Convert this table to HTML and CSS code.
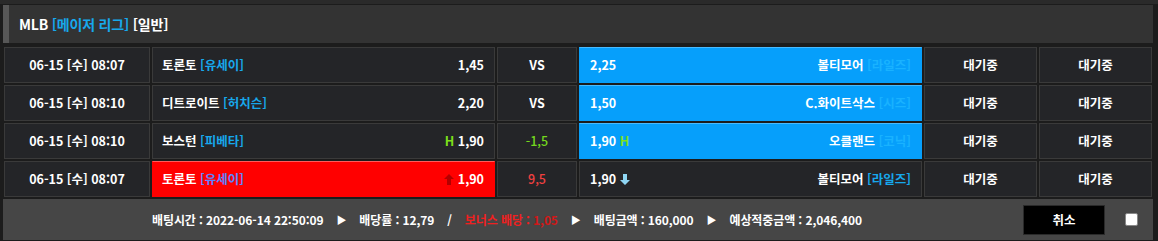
FILE: index.html
```html
<!DOCTYPE html>
<html lang="ko">
<head>
<meta charset="utf-8">
<link rel="stylesheet" href="styles.css">
</head>
<body>
<div class="wrap">
  <div class="league">MLB <span class="blue">[메이저 리그]</span> [일반]</div>
  <div class="rows">
    <div class="row">
      <div class="cell date">06-15 [수] 08:07</div>
      <div class="cell team home"><span>토론토 <span class="blue">[유세이]</span></span><span class="odd">1,45</span></div>
      <div class="cell mid">VS</div>
      <div class="cell team away sel"><span class="odd">2,25</span><span>볼티모어 <span class="blue">[라일즈]</span></span></div>
      <div class="cell st">대기중</div>
      <div class="cell st">대기중</div>
    </div>
    <div class="row">
      <div class="cell date">06-15 [수] 08:10</div>
      <div class="cell team home"><span>디트로이트 <span class="blue">[허치슨]</span></span><span class="odd">2,20</span></div>
      <div class="cell mid">VS</div>
      <div class="cell team away sel"><span class="odd">1,50</span><span>C.화이트삭스 <span class="blue">[시즈]</span></span></div>
      <div class="cell st">대기중</div>
      <div class="cell st">대기중</div>
    </div>
    <div class="row">
      <div class="cell date">06-15 [수] 08:10</div>
      <div class="cell team home"><span>보스턴 <span class="blue">[피베타]</span></span><span class="odd"><b class="h">H</b> 1,90</span></div>
      <div class="cell mid green">-1,5</div>
      <div class="cell team away sel"><span class="odd">1,90 <b class="h">H</b></span><span>오클랜드 <span class="blue">[코닉]</span></span></div>
      <div class="cell st">대기중</div>
      <div class="cell st">대기중</div>
    </div>
    <div class="row">
      <div class="cell date">06-15 [수] 08:07</div>
      <div class="cell team home red"><span>토론토 <span class="blue">[유세이]</span></span><span class="odd"><svg class="arr" width="10" height="11" viewBox="0 0 10 11"><path d="M5 0 L10 5 L7 5 L7 11 L3 11 L3 5 L0 5 Z" fill="#b30000"/></svg> 1,90</span></div>
      <div class="cell mid redtxt">9,5</div>
      <div class="cell team away"><span class="odd">1,90 <svg class="arr" width="10" height="11" viewBox="0 0 10 11"><path d="M5 11 L10 6 L7 6 L7 0 L3 0 L3 6 L0 6 Z" fill="#8fd6f3"/></svg></span><span>볼티모어 <span class="blue">[라일즈]</span></span></div>
      <div class="cell st">대기중</div>
      <div class="cell st">대기중</div>
    </div>
  </div>
  <div class="footer">
    <div class="info">
      <span>배팅시간 : 2022-06-14 22:50:09</span>
      <span class="tri">▶</span>
      <span>배당률 : 12,79</span>
      <span class="slash">/</span>
      <span class="bonus">보너스 배당 : <span class="bval">1,05</span></span>
      <span class="tri">▶</span>
      <span>배팅금액 : 160,000</span>
      <span class="tri">▶</span>
      <span>예상적중금액 : 2,046,400</span>
    </div>
    <button class="cancel">취소</button>
    <span class="check"></span>
  </div>
</div>
</body>
</html>
```

FILE: styles.css
```css
* { box-sizing: border-box; }
html, body { margin: 0; padding: 0; }
body {
  width: 1158px;
  height: 241px;
  background: #1c1c1c;
  font-family: "Noto Sans CJK KR", "Noto Sans", sans-serif;
  font-weight: 700;
  font-size: 12.5px;
  color: #ffffff;
  overflow: hidden;
}
.wrap {
  padding: 5px 5px 0 3px;
  background: linear-gradient(#2a2a2a 0, #2a2a2a 4px, #1c1c1c 4px);
}
.league {
  height: 38px;
  background: #333333;
  border-left: 6px solid #575757;
  padding-left: 10px;
  font-size: 14px;
  line-height: 38px;
  letter-spacing: -0.2px;
}
.blue { color: #17a8ec; }
.rows {
  margin-top: 4px;
  padding: 0 1px;
  display: flex;
  flex-direction: column;
  gap: 2px;
}
.row {
  display: grid;
  grid-template-columns: 146px 343px 80px 343px 113px 113px;
  gap: 2px;
  height: 36px;
}
.cell {
  background: #242528;
  border: 1px solid #3a3a3a;
  display: flex;
  align-items: center;
  line-height: 1;
  white-space: nowrap;
}
.date, .mid, .st { justify-content: center; }
.team { justify-content: space-between; padding: 0 10px; }
.team.home { padding-left: 9px; }
.odd { display: inline-block; }
.h { color: #7ee01a; font-weight: 700; }
.arr { display: inline-block; vertical-align: -1px; }
.sel { background: #069ffb; border-color: #069ffb; border-top-color: #48bbff; }
.sel .blue { color: #19b2ff; }
.red { background: #ff0000; border-color: #ff0000; border-top-color: #ff5c5c; }
.red .blue { color: #5d83ff; }
.green { color: #74d81e; font-weight: 500; }
.redtxt { color: #f04040; font-weight: 500; }
.footer {
  margin-top: 2px;
  height: 41px;
  background: #464646;
  display: flex;
  align-items: center;
  padding-left: 149px;
  padding-right: 15px;
}
.info {
  display: flex;
  align-items: center;
  gap: 11px;
  font-size: 12px;
  letter-spacing: -0.1px;
}
.tri { font-size: 10px; margin: 0 2px; }
.slash { margin: 0 2px; }
.bonus { color: #f02020; }
.bval { color: #d01818; }
.cancel {
  margin-left: auto;
  width: 82px;
  height: 30px;
  background: #000;
  border: 1px solid #2a2a2a;
  color: #fff;
  font-family: inherit;
  font-weight: 700;
  font-size: 12.5px;
  padding: 0;
}
.check {
  margin-left: 20px;
  width: 13px;
  height: 13px;
  background: #fff;
  border: 1px solid #888;
  border-radius: 2px;
}
```
